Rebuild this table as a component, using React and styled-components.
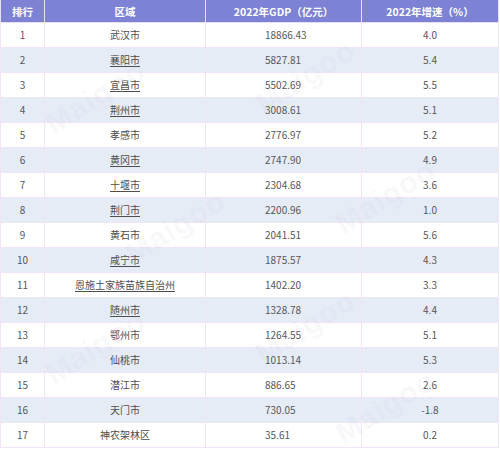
import React from "react";
import styled, { createGlobalStyle } from "styled-components";

const Global = createGlobalStyle`
  html, body { margin: 0; padding: 0; background: #fff; }
  body { font-family: "Noto Sans CJK SC", "Noto Sans", sans-serif; }
`;

const Wrap = styled.div`
  position: relative;
  width: 500px;
  height: 451px;
  overflow: hidden;
`;

const Table = styled.table`
  width: 498px;
  border-collapse: collapse;
  table-layout: fixed;
  font-size: 10px;
  color: #575757;
`;

const Th = styled.th`
  height: 22px;
  padding: 0;
  background: #7d82d4;
  color: #fff;
  font-weight: 700;
  font-size: 10.5px;
  text-align: center;
  border: 1px solid #e9dff2;
  border-top: none;
`;

const Tr = styled.tr`
  background: ${(p) => (p.$stripe ? "#e6ecf6" : "#fff")};
`;

const Td = styled.td`
  height: 24px;
  padding: ${(p) => (p.$left ? "0 0 0 59px" : "0")};
  text-align: ${(p) => (p.$left ? "left" : "center")};
  border: 1px solid #f0e4f6;
  line-height: 1;
  white-space: nowrap;
`;

const Link = styled.span`
  text-decoration: ${(p) => (p.$u ? "underline" : "none")};
  text-underline-offset: 2px;
  color: #4d4d4d;
`;

const Mark = styled.div`
  position: absolute;
  font-family: "Liberation Sans", sans-serif;
  font-size: 30px;
  font-weight: 700;
  color: rgba(190, 190, 215, 0.1);
  transform: rotate(-32deg);
  pointer-events: none;
  letter-spacing: 1px;
`;

const rows = [
  ["1", "武汉市", "18866.43", "4.0", false],
  ["2", "襄阳市", "5827.81", "5.4", true],
  ["3", "宜昌市", "5502.69", "5.5", true],
  ["4", "荆州市", "3008.61", "5.1", true],
  ["5", "孝感市", "2776.97", "5.2", false],
  ["6", "黄冈市", "2747.90", "4.9", true],
  ["7", "十堰市", "2304.68", "3.6", true],
  ["8", "荆门市", "2200.96", "1.0", true],
  ["9", "黄石市", "2041.51", "5.6", false],
  ["10", "咸宁市", "1875.57", "4.3", true],
  ["11", "恩施土家族苗族自治州", "1402.20", "3.3", true],
  ["12", "随州市", "1328.78", "4.4", true],
  ["13", "鄂州市", "1264.55", "5.1", false],
  ["14", "仙桃市", "1013.14", "5.3", false],
  ["15", "潜江市", "886.65", "2.6", false],
  ["16", "天门市", "730.05", "-1.8", false],
  ["17", "神农架林区", "35.61", "0.2", false],
];

const marks = [
  [40, 80], [250, 60], [120, 210], [330, 180], [40, 330], [250, 310], [330, 390],
];

export default function App() {
  return (
    <Wrap>
      <Global />
      <Table>
        <colgroup>
          <col style={{ width: 44 }} />
          <col style={{ width: 161 }} />
          <col style={{ width: 156 }} />
          <col style={{ width: 137 }} />
        </colgroup>
        <thead>
          <tr>
            <Th>排行</Th>
            <Th>区域</Th>
            <Th>2022年GDP（亿元）</Th>
            <Th>2022年增速（%）</Th>
          </tr>
        </thead>
        <tbody>
          {rows.map(([n, name, gdp, rate, u], i) => (
            <Tr key={n} $stripe={i % 2 === 1}>
              <Td>{n}</Td>
              <Td>
                <Link $u={u}>{name}</Link>
              </Td>
              <Td $left>{gdp}</Td>
              <Td>{rate}</Td>
            </Tr>
          ))}
        </tbody>
      </Table>
      {marks.map(([x, y], i) => (
        <Mark key={i} style={{ left: x, top: y }}>
          Maigoo
        </Mark>
      ))}
    </Wrap>
  );
}
